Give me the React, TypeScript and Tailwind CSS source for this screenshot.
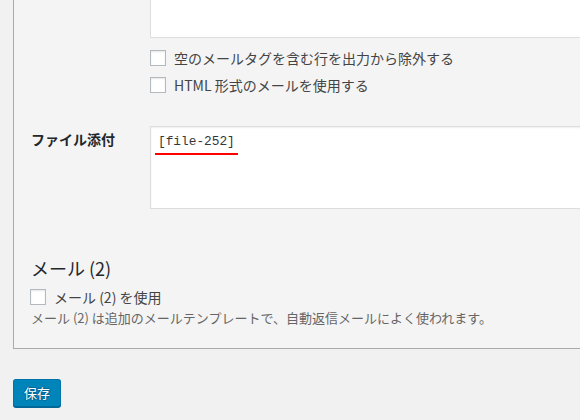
import React from "react";

function Box() {
  return <div className="w-4 h-4 shrink-0 border border-[#b4b9be] bg-white shadow-[inset_0_1px_2px_rgba(0,0,0,0.1)]" />;
}

export default function App() {
  return (
    <div className="w-[580px] h-[420px] overflow-hidden bg-[#f1f1f1] font-['Noto_Sans_CJK_JP','Noto_Sans',sans-serif]">
      <div className="ml-[13px] w-[640px] border-l border-b border-[#aaaaaa] bg-[#f4f4f4] pl-[17px] pb-[21px]">
        <div className="grid grid-cols-[119px_1fr]">
          <div />
          <div>
            <div className="h-[38px] border-x border-b border-[#dddddd] bg-white" />
            <div className="mt-[12px] flex flex-col gap-[11px]">
              <div className="flex items-center h-4">
                <Box />
                <span className="ml-2 text-[14px] leading-[20px] text-[#444444] whitespace-nowrap">空のメールタグを含む行を出力から除外する</span>
              </div>
              <div className="flex items-center h-4">
                <Box />
                <span className="ml-2 text-[14px] leading-[20px] text-[#444444] whitespace-nowrap">HTML 形式のメールを使用する</span>
              </div>
            </div>
          </div>
          <div className="mt-[33px] pt-[3px] text-[14px] leading-[20px] font-bold text-[#23282d]">ファイル添付</div>
          <div className="mt-[33px] h-[83px] border border-[#dddddd] bg-white shadow-[inset_0_1px_2px_rgba(0,0,0,0.07)] pt-[5px] pl-[4px]">
            <div className="pl-[3px] font-['Liberation_Mono',monospace] text-[12.8px] leading-[20px] text-[#32373c]">[file-252]</div>
            <div className="mt-[1px] h-[2px] w-[83px] bg-[#ff0000]" />
          </div>
        </div>
        <h2 className="mt-[47px] text-[18px] leading-[24px] font-normal text-[#23282d]">メール (2)</h2>
        <div className="mt-[9px] flex items-center h-4 -ml-px">
          <Box />
          <span className="ml-2 text-[14px] leading-[20px] text-[#444444]">メール (2) を使用</span>
        </div>
        <p className="mt-[4px] text-[13px] leading-[18px] text-[#666666]">メール (2) は追加のメールテンプレートで、自動返信メールによく使われます。</p>
      </div>
      <button className="ml-[13px] mt-[30px] w-[48px] h-[28px] rounded-[3px] border border-[#0073aa] border-b-[#006799] bg-[#0085ba] shadow-[0_1px_0_#006799] text-white text-[13px] leading-[26px] [text-shadow:0_-1px_1px_#006799,1px_0_1px_#006799,0_1px_1px_#006799,-1px_0_1px_#006799] flex items-center justify-center">
        保存
      </button>
    </div>
  );
}
